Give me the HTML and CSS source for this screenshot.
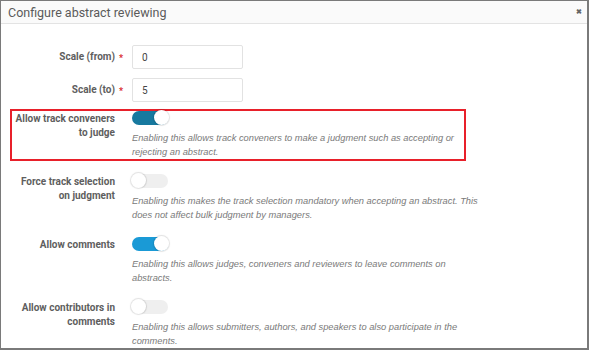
FILE: index.html
```html
<!DOCTYPE html>
<html>
<head>
    <meta charset="utf-8" />
    <title>Configure abstract reviewing</title>
    <link rel="stylesheet" href="styles.css">
</head>
<body>
    <div class="dialog">
        <div class="dialogHeader">
            <span class="dialogTitle">Configure abstract reviewing</span>
            <span class="closeBtn">&#10006;</span>
        </div>
        <form class="dialogBody" action="javascript:void(0);">
            <div class="field inputField">
                <label class="fieldLabel required">Scale (from)</label>
                <div class="fieldControl">
                    <input type="text" class="textInput" value="0">
                </div>
            </div>
            <div class="field inputField">
                <label class="fieldLabel required">Scale (to)</label>
                <div class="fieldControl">
                    <input type="text" class="textInput" value="5">
                </div>
            </div>
            <div class="field highlighted">
                <label class="fieldLabel">Allow track conveners to judge</label>
                <div class="fieldControl">
                    <span class="toggle on focused"><span class="knob"></span></span>
                    <p class="fieldDesc">Enabling this allows track conveners to make a judgment such as accepting or rejecting an abstract.</p>
                </div>
            </div>
            <div class="field">
                <label class="fieldLabel">Force track selection on judgment</label>
                <div class="fieldControl">
                    <span class="toggle"><span class="knob"></span></span>
                    <p class="fieldDesc">Enabling this makes the track selection mandatory when accepting an abstract. This does not affect bulk judgment by managers.</p>
                </div>
            </div>
            <div class="field">
                <label class="fieldLabel">Allow comments</label>
                <div class="fieldControl">
                    <span class="toggle on"><span class="knob"></span></span>
                    <p class="fieldDesc">Enabling this allows judges, conveners and reviewers to leave comments on abstracts.</p>
                </div>
            </div>
            <div class="field">
                <label class="fieldLabel">Allow contributors in comments</label>
                <div class="fieldControl">
                    <span class="toggle"><span class="knob"></span></span>
                    <p class="fieldDesc">Enabling this allows submitters, authors, and speakers to also participate in the comments.</p>
                </div>
            </div>
        </form>
    </div>
</body>
</html>
```

FILE: styles.css
```css
html, body {
    margin: 0;
    height: 100%;
}
body {
    font-family: Roboto, 'Liberation Sans', sans-serif;
    color: #555;
    background-color: white;
}
p {
    margin: 0;
}
.dialog {
    box-sizing: border-box;
    height: 350px;
    border-style: solid;
    border-color: #7a7a7a;
    border-width: 1px 2px 2px 1px;
    overflow: hidden;
}
.dialogHeader {
    display: flex;
    align-items: center;
    justify-content: space-between;
    height: 22px;
    padding: 0 5px 0 7px;
    background-color: #fafafa;
    border-bottom: 1px solid #e3e3e3;
}
.dialogTitle {
    font-size: 12.5px;
    color: #5a5a5a;
}
.closeBtn {
    font-size: 7px;
    font-weight: bold;
    color: #666;
}
.dialogBody {
    padding: 19px 0 0 9px;
}
.field {
    display: grid;
    grid-template-columns: 112px 350px;
    column-gap: 8px;
    width: 452px;
    border: 2px solid transparent;
    margin-bottom: 11px;
}
.inputField {
    margin-bottom: 5px;
}
.highlighted {
    border-color: #e8202a;
}
.fieldLabel {
    position: relative;
    text-align: right;
    padding-right: 9px;
    padding-top: 1px;
    font-size: 10px;
    font-weight: bold;
    line-height: 14px;
    color: #5e5e5e;
}
.inputField .fieldLabel {
    padding-top: 5px;
}
.required::after {
    content: "*";
    position: absolute;
    right: 1px;
    top: 6px;
    color: #d9262b;
    font-size: 9px;
}
.textInput {
    box-sizing: border-box;
    width: 111px;
    height: 24px;
    border: 1px solid #e2e2e2;
    border-radius: 2px;
    padding: 0 9px;
    font-family: Roboto, sans-serif;
    font-size: 10px;
    color: #444;
}
.toggle {
    position: relative;
    display: block;
    width: 36px;
    height: 14px;
    border-radius: 8px;
    background-color: #efefef;
}
.toggle.on {
    background-color: #1a9ad6;
}
.toggle.focused {
    background-color: #17799f;
}
.knob {
    position: absolute;
    top: -1px;
    left: -1px;
    width: 15px;
    height: 15px;
    border-radius: 50%;
    background-color: white;
    box-shadow: 0 0 1px 1px rgba(0, 0, 0, 0.12);
}
.toggle.on .knob {
    left: auto;
    right: -1px;
}
.fieldDesc {
    margin-top: 6px;
    font-family: 'Liberation Sans', Arial, sans-serif;
    font-style: italic;
    font-size: 9.3px;
    line-height: 14px;
    color: #7a7a7a;
}
```
